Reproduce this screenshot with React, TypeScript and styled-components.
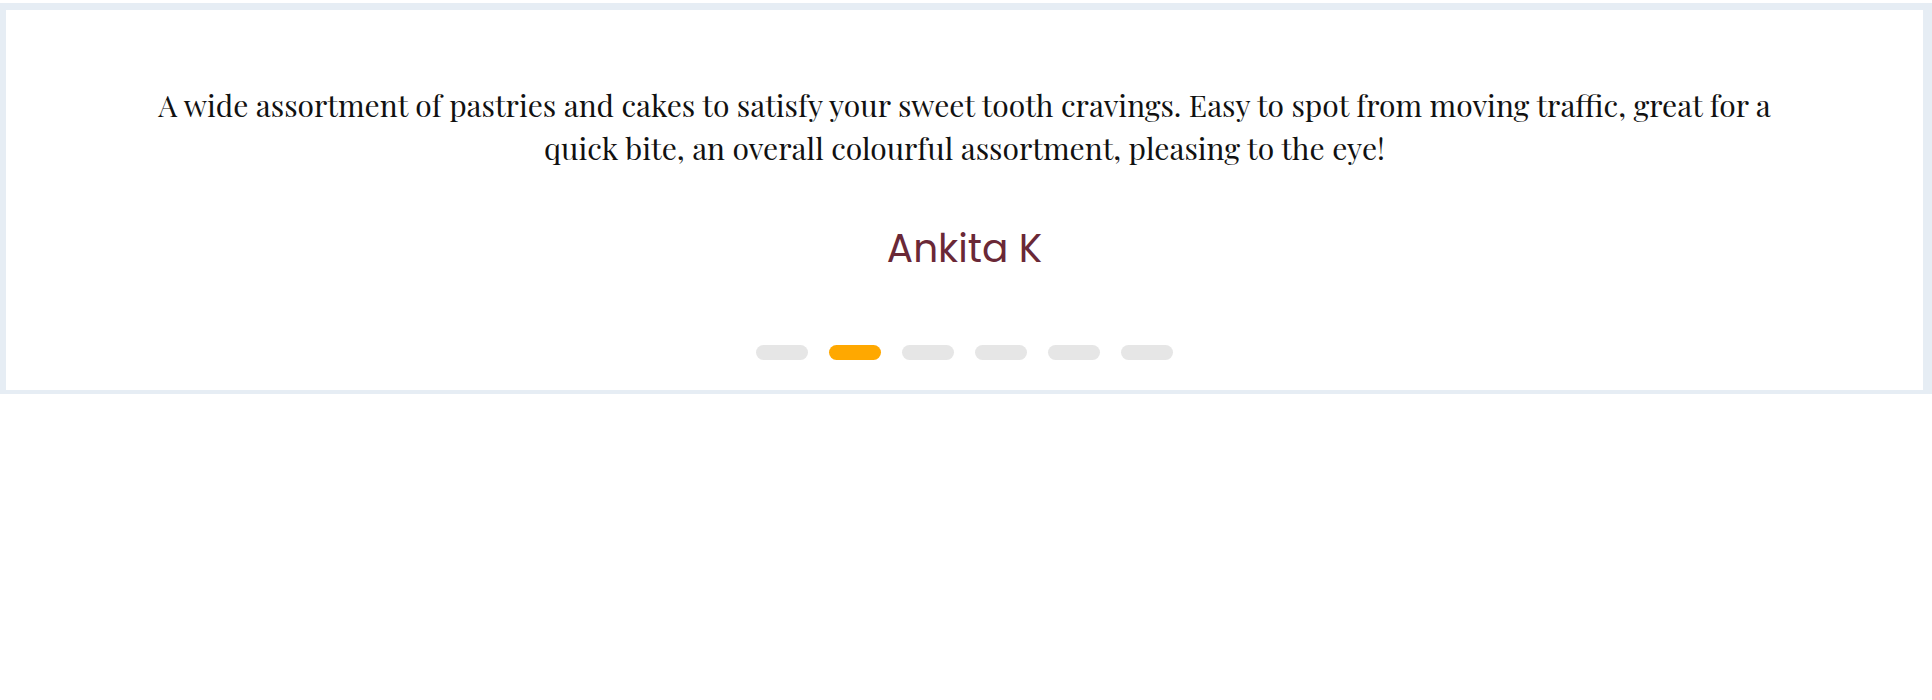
import styled, { createGlobalStyle } from "styled-components";
import { useState } from "react";

const GlobalStyle = createGlobalStyle`
  body {
    margin: 0;
    background: #ffffff;
  }
`;

const testimonials = [
  {
    quote:
      "Freshly baked every morning, the breads are soft and the staff are friendly. A lovely little stop on the way to work.",
    author: "Rahul M",
  },
  {
    quote:
      "A wide assortment of pastries and cakes to satisfy your sweet tooth cravings. Easy to spot from moving traffic, great for a quick bite, an overall colourful assortment, pleasing to the eye!",
    author: "Ankita K",
  },
  { quote: "The custom birthday cake was a hit with everyone.", author: "Priya S" },
  { quote: "Great coffee and even better croissants.", author: "Vikram D" },
  { quote: "Cosy place, reasonable prices, tasty treats.", author: "Sneha R" },
  { quote: "Our go-to bakery for every celebration.", author: "Arjun P" },
];

export default function App() {
  const [active, setActive] = useState(1);
  const current = testimonials[active];

  return (
    <>
      <GlobalStyle />
      <Frame>
        <Quote>{current.quote}</Quote>
        <Author>{current.author}</Author>
        <Dots>
          {testimonials.map((t, i) => (
            <Dot
              key={t.author}
              $active={i === active}
              onClick={() => setActive(i)}
              aria-label={`Show testimonial ${i + 1}`}
            />
          ))}
        </Dots>
      </Frame>
    </>
  );
}

const Frame = styled.section`
  box-sizing: border-box;
  margin-top: 3px;
  width: 100%;
  border-style: solid;
  border-color: #e6edf4;
  border-width: 7px 9px 4px 6px;
  padding: 74px 0 30px;
  display: flex;
  flex-direction: column;
  align-items: center;
`;

const Quote = styled.p`
  margin: 0;
  max-width: 1650px;
  text-align: center;
  font-family: "Playfair Display", "Liberation Serif", serif;
  font-size: 30px;
  line-height: 43px;
  color: #111111;
`;

const Author = styled.h4`
  margin: 50px 0 0;
  font-family: "Poppins", "Inter", sans-serif;
  font-weight: 400;
  font-size: 39px;
  line-height: 57px;
  color: #6a2837;
`;

const Dots = styled.div`
  margin-top: 68px;
  display: flex;
  gap: 21px;
`;

const Dot = styled.button<{ $active: boolean }>`
  width: 52px;
  height: 15px;
  padding: 0;
  border: none;
  border-radius: 8px;
  background: ${(p) => (p.$active ? "#ffa800" : "#e6e6e6")};
  cursor: pointer;
`;
